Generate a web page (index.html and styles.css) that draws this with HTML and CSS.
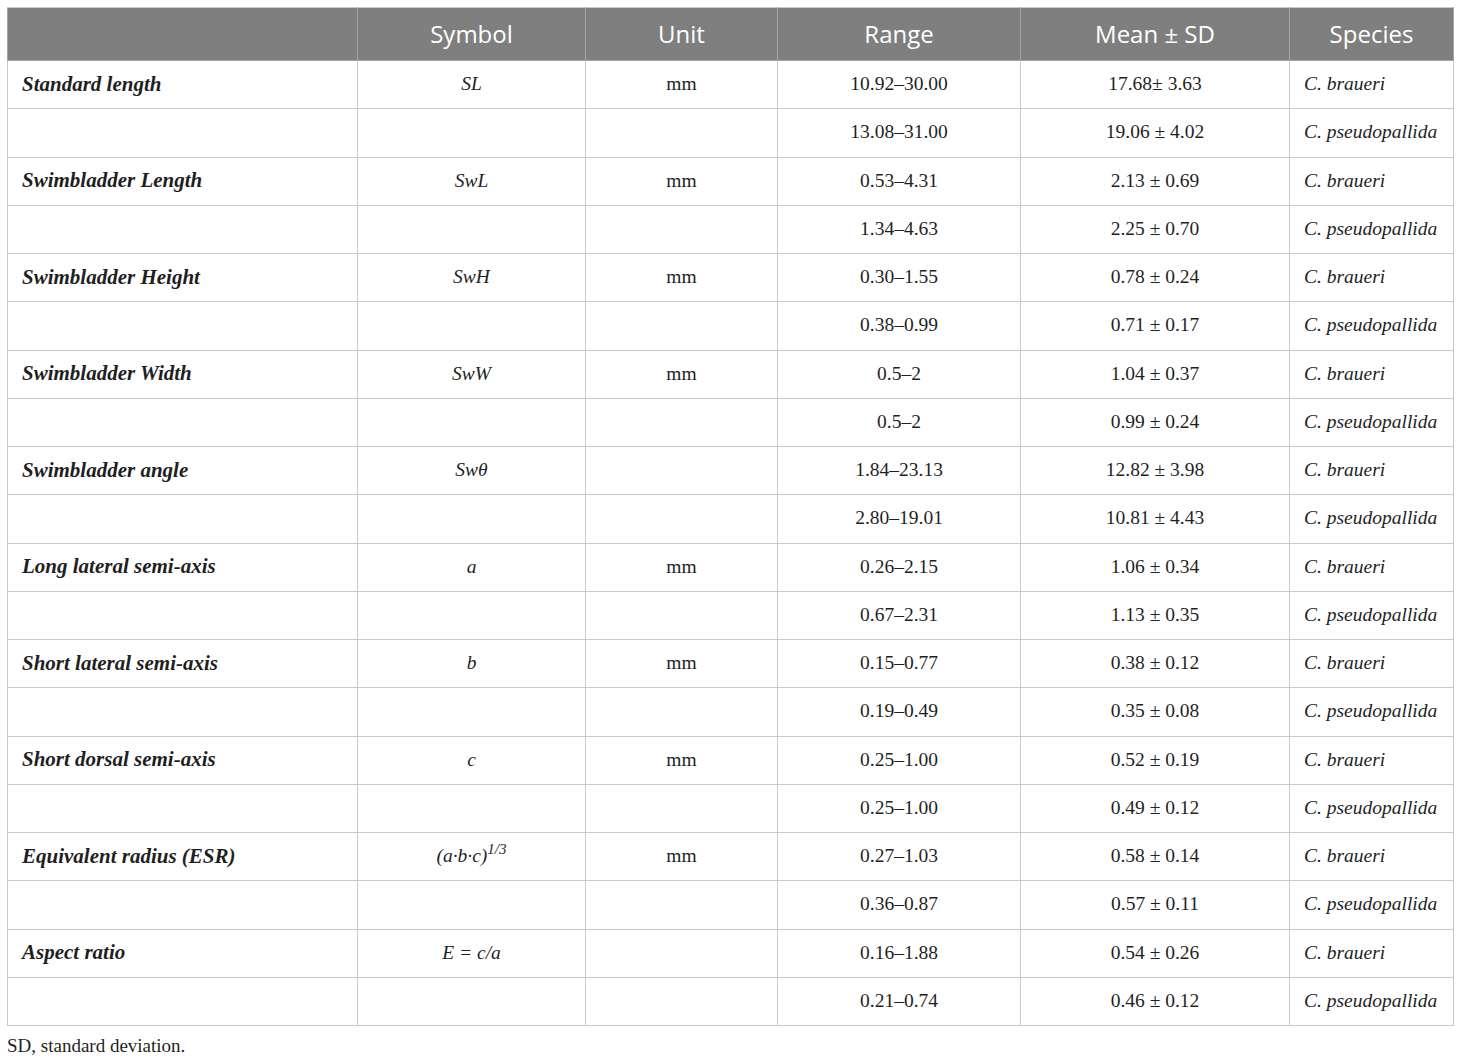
FILE: index.html
```html
<!DOCTYPE html>
<html>
<head>
<meta charset="utf-8">
<link rel="stylesheet" href="styles.css">
</head>
<body>
<table class="data">
<colgroup>
<col class="c1"><col class="c2"><col class="c3"><col class="c4"><col class="c5"><col class="c6">
</colgroup>
<thead>
<tr><th></th><th>Symbol</th><th>Unit</th><th>Range</th><th>Mean ± SD</th><th>Species</th></tr>
</thead>
<tbody>
<tr><td class="param">Standard length</td><td class="sym">SL</td><td>mm</td><td>10.92–30.00</td><td>17.68± 3.63</td><td class="sp">C. braueri</td></tr>
<tr><td></td><td></td><td></td><td>13.08–31.00</td><td>19.06 ± 4.02</td><td class="sp">C. pseudopallida</td></tr>
<tr><td class="param">Swimbladder Length</td><td class="sym">SwL</td><td>mm</td><td>0.53–4.31</td><td>2.13 ± 0.69</td><td class="sp">C. braueri</td></tr>
<tr><td></td><td></td><td></td><td>1.34–4.63</td><td>2.25 ± 0.70</td><td class="sp">C. pseudopallida</td></tr>
<tr><td class="param">Swimbladder Height</td><td class="sym">SwH</td><td>mm</td><td>0.30–1.55</td><td>0.78 ± 0.24</td><td class="sp">C. braueri</td></tr>
<tr><td></td><td></td><td></td><td>0.38–0.99</td><td>0.71 ± 0.17</td><td class="sp">C. pseudopallida</td></tr>
<tr><td class="param">Swimbladder Width</td><td class="sym">SwW</td><td>mm</td><td>0.5–2</td><td>1.04 ± 0.37</td><td class="sp">C. braueri</td></tr>
<tr><td></td><td></td><td></td><td>0.5–2</td><td>0.99 ± 0.24</td><td class="sp">C. pseudopallida</td></tr>
<tr><td class="param">Swimbladder angle</td><td class="sym">Swθ</td><td></td><td>1.84–23.13</td><td>12.82 ± 3.98</td><td class="sp">C. braueri</td></tr>
<tr><td></td><td></td><td></td><td>2.80–19.01</td><td>10.81 ± 4.43</td><td class="sp">C. pseudopallida</td></tr>
<tr><td class="param">Long lateral semi-axis</td><td class="sym">a</td><td>mm</td><td>0.26–2.15</td><td>1.06 ± 0.34</td><td class="sp">C. braueri</td></tr>
<tr><td></td><td></td><td></td><td>0.67–2.31</td><td>1.13 ± 0.35</td><td class="sp">C. pseudopallida</td></tr>
<tr><td class="param">Short lateral semi-axis</td><td class="sym">b</td><td>mm</td><td>0.15–0.77</td><td>0.38 ± 0.12</td><td class="sp">C. braueri</td></tr>
<tr><td></td><td></td><td></td><td>0.19–0.49</td><td>0.35 ± 0.08</td><td class="sp">C. pseudopallida</td></tr>
<tr><td class="param">Short dorsal semi-axis</td><td class="sym">c</td><td>mm</td><td>0.25–1.00</td><td>0.52 ± 0.19</td><td class="sp">C. braueri</td></tr>
<tr><td></td><td></td><td></td><td>0.25–1.00</td><td>0.49 ± 0.12</td><td class="sp">C. pseudopallida</td></tr>
<tr><td class="param">Equivalent radius (ESR)</td><td class="sym">(a·b·c)<sup>1/3</sup></td><td>mm</td><td>0.27–1.03</td><td>0.58 ± 0.14</td><td class="sp">C. braueri</td></tr>
<tr><td></td><td></td><td></td><td>0.36–0.87</td><td>0.57 ± 0.11</td><td class="sp">C. pseudopallida</td></tr>
<tr><td class="param">Aspect ratio</td><td class="sym">E = c/a</td><td></td><td>0.16–1.88</td><td>0.54 ± 0.26</td><td class="sp">C. braueri</td></tr>
<tr><td></td><td></td><td></td><td>0.21–0.74</td><td>0.46 ± 0.12</td><td class="sp">C. pseudopallida</td></tr>
</tbody>
</table>
<p class="note">SD, standard deviation.</p>
</body>
</html>
```
FILE: styles.css
```css
html, body {
  margin: 0;
  padding: 0;
  background: #ffffff;
}
body {
  padding: 7px 0 0 7px;
  font-family: "Liberation Serif", "Times New Roman", serif;
  color: #1f1f1f;
}
.data {
  border-collapse: collapse;
  table-layout: fixed;
  width: 1446px;
  font-size: 19.5px;
}
.c1 { width: 350px; }
.c2 { width: 228px; }
.c3 { width: 192px; }
.c4 { width: 243px; }
.c5 { width: 269px; }
.c6 { width: 164px; }
.data th, .data td {
  border: 1px solid #c9c9c9;
  padding: 0 14px;
  text-align: center;
  vertical-align: middle;
  white-space: nowrap;
}
.data td {
  padding-bottom: 1px;
}
.data thead tr {
  height: 53px;
}
.data th {
  background: #7f7f7f;
  color: #ffffff;
  font-family: "Open Sans", "Noto Sans", sans-serif;
  font-weight: 400;
  font-size: 24px;
  border-color: #a5a5a5;
  border-top-color: #c9c9c9;
  padding-bottom: 2px;
}
.data tbody tr {
  height: 48.25px;
}
.data td.param {
  text-align: left;
  font-weight: bold;
  font-style: italic;
  font-size: 21px;
}
.data td.sym {
  font-style: italic;
}
.data td.sp {
  text-align: left;
  font-style: italic;
}
.data sup {
  font-size: 15px;
  line-height: 0;
  vertical-align: 8px;
}
.note {
  margin: 9px 0 0 0;
  font-size: 19px;
  color: #1f1f1f;
}
```
